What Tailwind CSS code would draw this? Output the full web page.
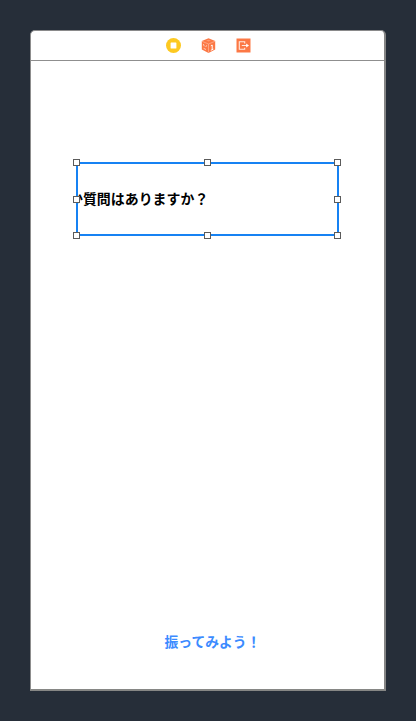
<!DOCTYPE html>
<html lang="ja">
<head>
<meta charset="utf-8">
<title>View Controller</title>
<script src="https://cdn.jsdelivr.net/npm/@tailwindcss/browser@4"></script>
</head>
<body class="h-[721px] w-[416px] overflow-hidden bg-[#262e39] pt-[30px] pl-[30px] font-['Liberation_Sans','Noto_Sans_CJK_JP',sans-serif]">
<main class="flex h-[661px] w-[356px] flex-col rounded-t-[5px] border border-r-2 border-b-2 border-t-[#8a8a8b] border-r-[#858585] border-b-[#868785] border-l-[#8d8d8d] bg-white">
  <header class="flex h-[30px] shrink-0 items-center justify-center gap-5 border-b border-[#8f8f8f] pl-[2px]">
    <svg class="size-[15px]" viewBox="0 0 15 15"><circle cx="7.5" cy="7.5" r="7.5" fill="#fdc921"/><rect x="4.6" y="4.6" width="5.8" height="5.8" rx=".5" fill="#fff"/></svg>
    <svg class="size-[15px]" viewBox="0 0 15 15"><path d="M7.5.2 14.2 3v8.6L7.5 14.9.8 11.6V3Z" fill="#fc7845"/><path d="M1 3.3 7.5 6 14 3.3M7.5 6v8.5" fill="none" stroke="#ffc1a8" stroke-width=".6"/><path d="M9.8 7.8 11.2 7v4.6M9.8 12.3l2.6-1.2" fill="none" stroke="#fff" stroke-width="1"/><path d="m2.4 6 .8 2.3M5.7 7.3 4.7 9M2.6 10.3l2.4 1.2" fill="none" stroke="#ffe1d5" stroke-width=".8"/><path d="m5 2.6 2.4-.9 2.6.9-2.5 1Z" fill="#ff9a72"/></svg>
    <svg class="size-[15px]" viewBox="0 0 15 15"><path d="M.5.5h14v14H.5z" fill="#fc7845"/><path d="M8.7 5.4V3.8H3.3v7.5h5.4V9.7M5.8 7.5h5.3" fill="none" stroke="#ffe9df" stroke-width="1.1"/><path d="m10.2 5.5 2.8 2-2.8 2Z" fill="#fff"/></svg>
  </header>
  <section class="flex flex-1 flex-col items-center pt-[101px]">
    <div class="relative mr-[1px] h-[74px] w-[263px] border-2 border-[#1682f3]">
      <div class="flex h-full w-full items-center overflow-hidden">
        <p class="-ml-[8.5px] whitespace-nowrap text-[13.95px] leading-5 font-bold text-black">か質問はありますか？</p>
      </div>
      <i class="absolute -top-[5px] -left-[5px] size-[7px] border border-[#5b5b5b] bg-white"></i>
      <i class="absolute -top-[5px] left-[126px] size-[7px] border border-[#5b5b5b] bg-white"></i>
      <i class="absolute -top-[5px] -right-[4px] size-[7px] border border-[#5b5b5b] bg-white"></i>
      <i class="absolute top-[32px] -left-[5px] size-[7px] border border-[#5b5b5b] bg-white"></i>
      <i class="absolute top-[32px] -right-[4px] size-[7px] border border-[#5b5b5b] bg-white"></i>
      <i class="absolute -bottom-[5px] -left-[5px] size-[7px] border border-[#5b5b5b] bg-white"></i>
      <i class="absolute -bottom-[5px] left-[126px] size-[7px] border border-[#5b5b5b] bg-white"></i>
      <i class="absolute -right-[4px] -bottom-[5px] size-[7px] border border-[#5b5b5b] bg-white"></i>
    </div>
    <button class="mt-auto mb-[36px] ml-[10px] text-[13.8px] leading-5 font-bold text-[#3c8bff]">振ってみよう！</button>
  </section>
</main>
</body>
</html>
